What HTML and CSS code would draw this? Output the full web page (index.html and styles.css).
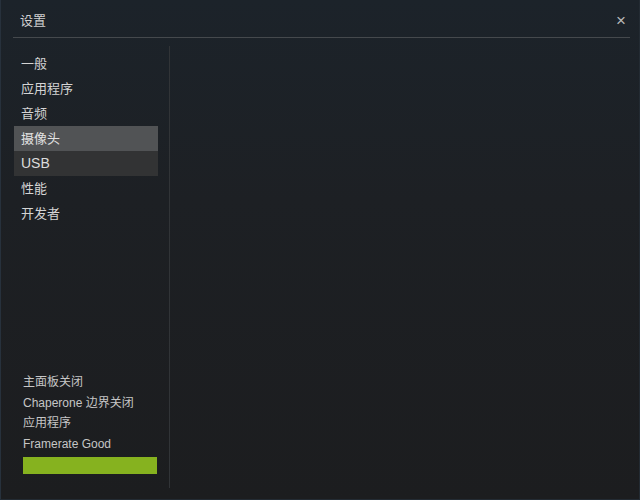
FILE: index.html
```html
<!DOCTYPE html>
<html lang="zh">
<head>
<meta charset="utf-8">
<title>设置</title>
<link rel="stylesheet" href="styles.css">
</head>
<body>
<div class="window">
  <div class="header">
    <span class="title">设置</span>
    <span class="close">×</span>
  </div>
  <div class="body">
    <div class="sidebar">
      <ul class="menu">
        <li class="item">一般</li>
        <li class="item">应用程序</li>
        <li class="item">音频</li>
        <li class="item active">摄像头</li>
        <li class="item hover">USB</li>
        <li class="item">性能</li>
        <li class="item">开发者</li>
      </ul>
      <div class="status">
        <div class="line">主面板关闭</div>
        <div class="line">Chaperone 边界关闭</div>
        <div class="line">应用程序</div>
        <div class="line">Framerate Good</div>
        <div class="bar"></div>
      </div>
    </div>
    <div class="main"></div>
  </div>
</div>
</body>
</html>
```
FILE: styles.css
```css
html, body {
  margin: 0;
  padding: 0;
  background: #1c1d1f;
}
.window {
  box-sizing: border-box;
  width: 640px;
  height: 500px;
  display: flex;
  flex-direction: column;
  background: linear-gradient(to bottom, #1c232a 0%, #1d2024 40%, #1c1d1f 100%);
  border-left: 1px solid #27313c;
  border-right: 1px solid #232b33;
  border-bottom: 1px solid #232b33;
  font-family: "Liberation Sans", "Noto Sans CJK SC", sans-serif;
  color: #d2d2d2;
}
.header {
  height: 37px;
  margin: 0 9px 0 12px;
  padding: 0 4px 0 7px;
  display: flex;
  align-items: center;
  justify-content: space-between;
  border-bottom: 1px solid #45494d;
}
.title {
  font-size: 13px;
  color: #d0d0d0;
  margin-top: 2px;
}
.close {
  font-size: 17px;
  color: #b8b8b8;
  margin-top: 4px;
}
.body {
  flex: 1;
  display: flex;
  padding: 8px 0 11px 13px;
  min-height: 0;
}
.sidebar {
  width: 155px;
  border-right: 1px solid #313437;
  display: flex;
  flex-direction: column;
  justify-content: space-between;
  padding: 5px 0 14px 0;
}
.menu {
  list-style: none;
  margin: 0;
  padding: 0;
  width: 144px;
}
.item {
  height: 25px;
  line-height: 25px;
  padding-left: 7px;
  font-size: 13px;
  color: #d4d4d4;
}
.item.active {
  background: #515355;
  color: #e2e2e2;
}
.item.hover {
  background: #323334;
  color: #dcdcdc;
  font-size: 14px;
}
.status {
  padding-left: 9px;
}
.line {
  font-size: 12px;
  line-height: 20.5px;
  color: #c6c6c6;
}
.bar {
  margin-top: 3px;
  width: 134px;
  height: 17px;
  background: #86b21f;
}
.main {
  flex: 1;
}
```
